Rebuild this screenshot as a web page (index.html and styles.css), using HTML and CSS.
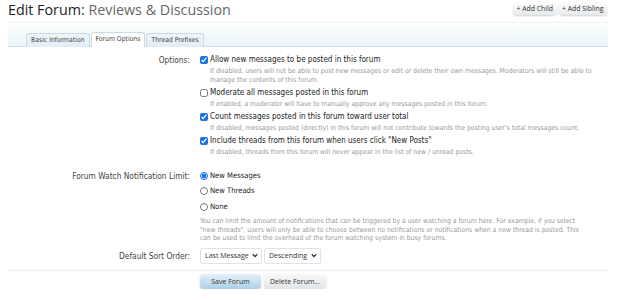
FILE: index.html
```html
<!DOCTYPE html>
<html lang="en">
<head>
	<meta charset="utf-8">
	<title>Edit Forum: Reviews &amp; Discussion</title>
	<link rel="stylesheet" href="styles.css">
</head>
<body>

<div class="page">

	<div class="title-bar">
		<h1 class="title">Edit Forum: <span class="title-name">Reviews &amp; Discussion</span></h1>
		<div class="top-ctrls">
			<a class="top-btn" href="#">+ Add Child</a>
			<a class="top-btn" href="#">+ Add Sibling</a>
		</div>
	</div>

	<ul class="tabs">
		<li class="tab"><a href="#">Basic Information</a></li>
		<li class="tab active"><a href="#">Forum Options</a></li>
		<li class="tab"><a href="#">Thread Prefixes</a></li>
	</ul>

	<form class="form" action="#">

		<div class="row">
			<div class="row-label">Options:</div>
			<div class="row-ctrl">
				<div class="opt">
					<label class="check"><input type="checkbox" checked> Allow new messages to be posted in this forum</label>
					<p class="hint">If disabled, users will not be able to post new messages or edit or delete their own messages. Moderators will still be able to manage the contents of this forum.</p>
				</div>
				<div class="opt">
					<label class="check"><input type="checkbox"> Moderate all messages posted in this forum</label>
					<p class="hint">If enabled, a moderator will have to manually approve any messages posted in this forum.</p>
				</div>
				<div class="opt">
					<label class="check"><input type="checkbox" checked> Count messages posted in this forum toward user total</label>
					<p class="hint">If disabled, messages posted (directly) in this forum will not contribute towards the posting user's total messages count.</p>
				</div>
				<div class="opt">
					<label class="check"><input type="checkbox" checked> Include threads from this forum when users click "New Posts"</label>
					<p class="hint">If disabled, threads from this forum will never appear in the list of new / unread posts.</p>
				</div>
			</div>
		</div>

		<div class="row row-watch">
			<div class="row-label">Forum Watch Notification Limit:</div>
			<div class="row-ctrl">
				<label class="radio"><input type="radio" name="watch" checked> New Messages</label>
				<label class="radio"><input type="radio" name="watch"> New Threads</label>
				<label class="radio"><input type="radio" name="watch"> None</label>
				<p class="hint hint-wide">You can limit the amount of notifications that can be triggered by a user watching a forum here. For example, if you select "new threads", users will only be able to choose between no notifications or notifications when a new thread is posted. This can be used to limit the overhead of the forum watching system in busy forums.</p>
			</div>
		</div>

		<div class="row row-sort">
			<div class="row-label">Default Sort Order:</div>
			<div class="row-ctrl sort-ctrls">
				<span class="select-wrap">
					<select class="select select-field">
						<option>Last Message</option>
						<option>Thread Title</option>
						<option>Start Date</option>
					</select>
					<svg class="chev" viewBox="0 0 8 6" width="6" height="5"><path d="M1 1.3 L4 4.5 L7 1.3" fill="none" stroke="#333" stroke-width="1.8"/></svg>
				</span>
				<span class="select-wrap">
					<select class="select select-dir">
						<option>Descending</option>
						<option>Ascending</option>
					</select>
					<svg class="chev" viewBox="0 0 8 6" width="6" height="5"><path d="M1 1.3 L4 4.5 L7 1.3" fill="none" stroke="#333" stroke-width="1.8"/></svg>
				</span>
			</div>
		</div>

		<div class="submit-unit">
			<button type="button" class="btn btn-primary">Save Forum</button>
			<button type="button" class="btn">Delete Forum...</button>
		</div>

	</form>

</div>

</body>
</html>
```

FILE: styles.css
```css
body { margin: 0; background: #fff; color: #333; font-family: "DejaVu Sans Condensed", "DejaVu Sans", sans-serif; font-size: 8.3px; }
a { color: inherit; text-decoration: none; }
p { margin: 0; }

.page { width: 600px; margin: 0 8px; }

/* heading */
.title-bar { display: flex; justify-content: space-between; align-items: flex-start; height: 22px; }
.title { margin: 0; font-family: "Open Sans", sans-serif; font-weight: normal; font-size: 14.3px; line-height: 19px; color: #222; }
.title-name { color: #666; }
.top-ctrls { display: flex; gap: 2px; padding: 3px 1px 0 0; }
.top-btn { font-family: "Open Sans", sans-serif; font-size: 6.9px; line-height: 12px; padding: 0 3.5px; color: #333; border-radius: 4px; background: linear-gradient(#fafbfc, #e7eaec); box-shadow: 0 1px 2px rgba(0,0,0,0.18); }

/* tabs */
.tabs { display: flex; list-style: none; margin: 0; padding: 0 0 0 18px; height: 23px; align-items: flex-end; border-top: 1px solid #e8f4f7; border-bottom: 1px solid #cfe3ea; background: linear-gradient(#fff, #eaf5f9); }
.tab a { display: block; font-size: 6.8px; line-height: 13px; padding: 0 4px; margin-right: 1px; margin-bottom: -1px; color: #444; border: 1px solid #c8dce5; border-bottom: none; border-radius: 3px 3px 0 0; background: linear-gradient(#eef6fa, #e1eef4); }
.tab.active a { background: #fff; padding-bottom: 1px; }

/* form rows */
.form { padding-top: 7px; }
.row { display: grid; grid-template-columns: 182px 1fr; column-gap: 10px; }
.row-label { text-align: right; line-height: 12px; color: #444; }
.opt { margin-bottom: 2.5px; }
.check, .radio { display: flex; align-items: center; gap: 2px; font-size: 8px; line-height: 12px; color: #222; }
.radio { font-size: 7.6px; }
.check input, .radio input { width: 8px; height: 8px; margin: 0; accent-color: #1a73e8; }
.hint { padding: 1px 0 0 10px; width: 383px; font-size: 6.8px; line-height: 8.5px; color: #9a9a9a; }
.hint-wide { padding: 4.5px 0 0 0; width: 386px; }

.row-watch { margin-top: 11px; }
.radio { margin-bottom: 3.5px; }
.radio:last-of-type { margin-bottom: 0; }

.row-sort { margin-top: 5px; align-items: center; }
.row-sort .row-label { line-height: 16px; }
.sort-ctrls { display: flex; gap: 2px; }
.select-wrap { position: relative; display: block; }
.select { display: block; appearance: none; -webkit-appearance: none; height: 16px; font-family: "Open Sans", sans-serif; font-size: 7px; color: #333; background: #fff; border: 1px solid #dde3e6; border-radius: 2px; padding: 0 0 0 4px; }
.select-field { width: 62px; }
.select-dir { width: 57px; }
.chev { position: absolute; right: 4px; top: 5.5px; pointer-events: none; }

.submit-unit { display: flex; gap: 3px; margin-top: 6px; padding: 3px 0 0 192px; border-top: 1px solid #e4eff3; }
.btn { height: 15px; padding: 0; font-family: "Open Sans", sans-serif; font-size: 7px; color: #333; border: none; border-radius: 4px; background: linear-gradient(#f7f8f9, #e2e5e7); box-shadow: 0 1px 2px rgba(0,0,0,0.2); width: 62px; }
.btn-primary { width: 61px; background: linear-gradient(#e6f1f8, #a9cfe6); }
```
